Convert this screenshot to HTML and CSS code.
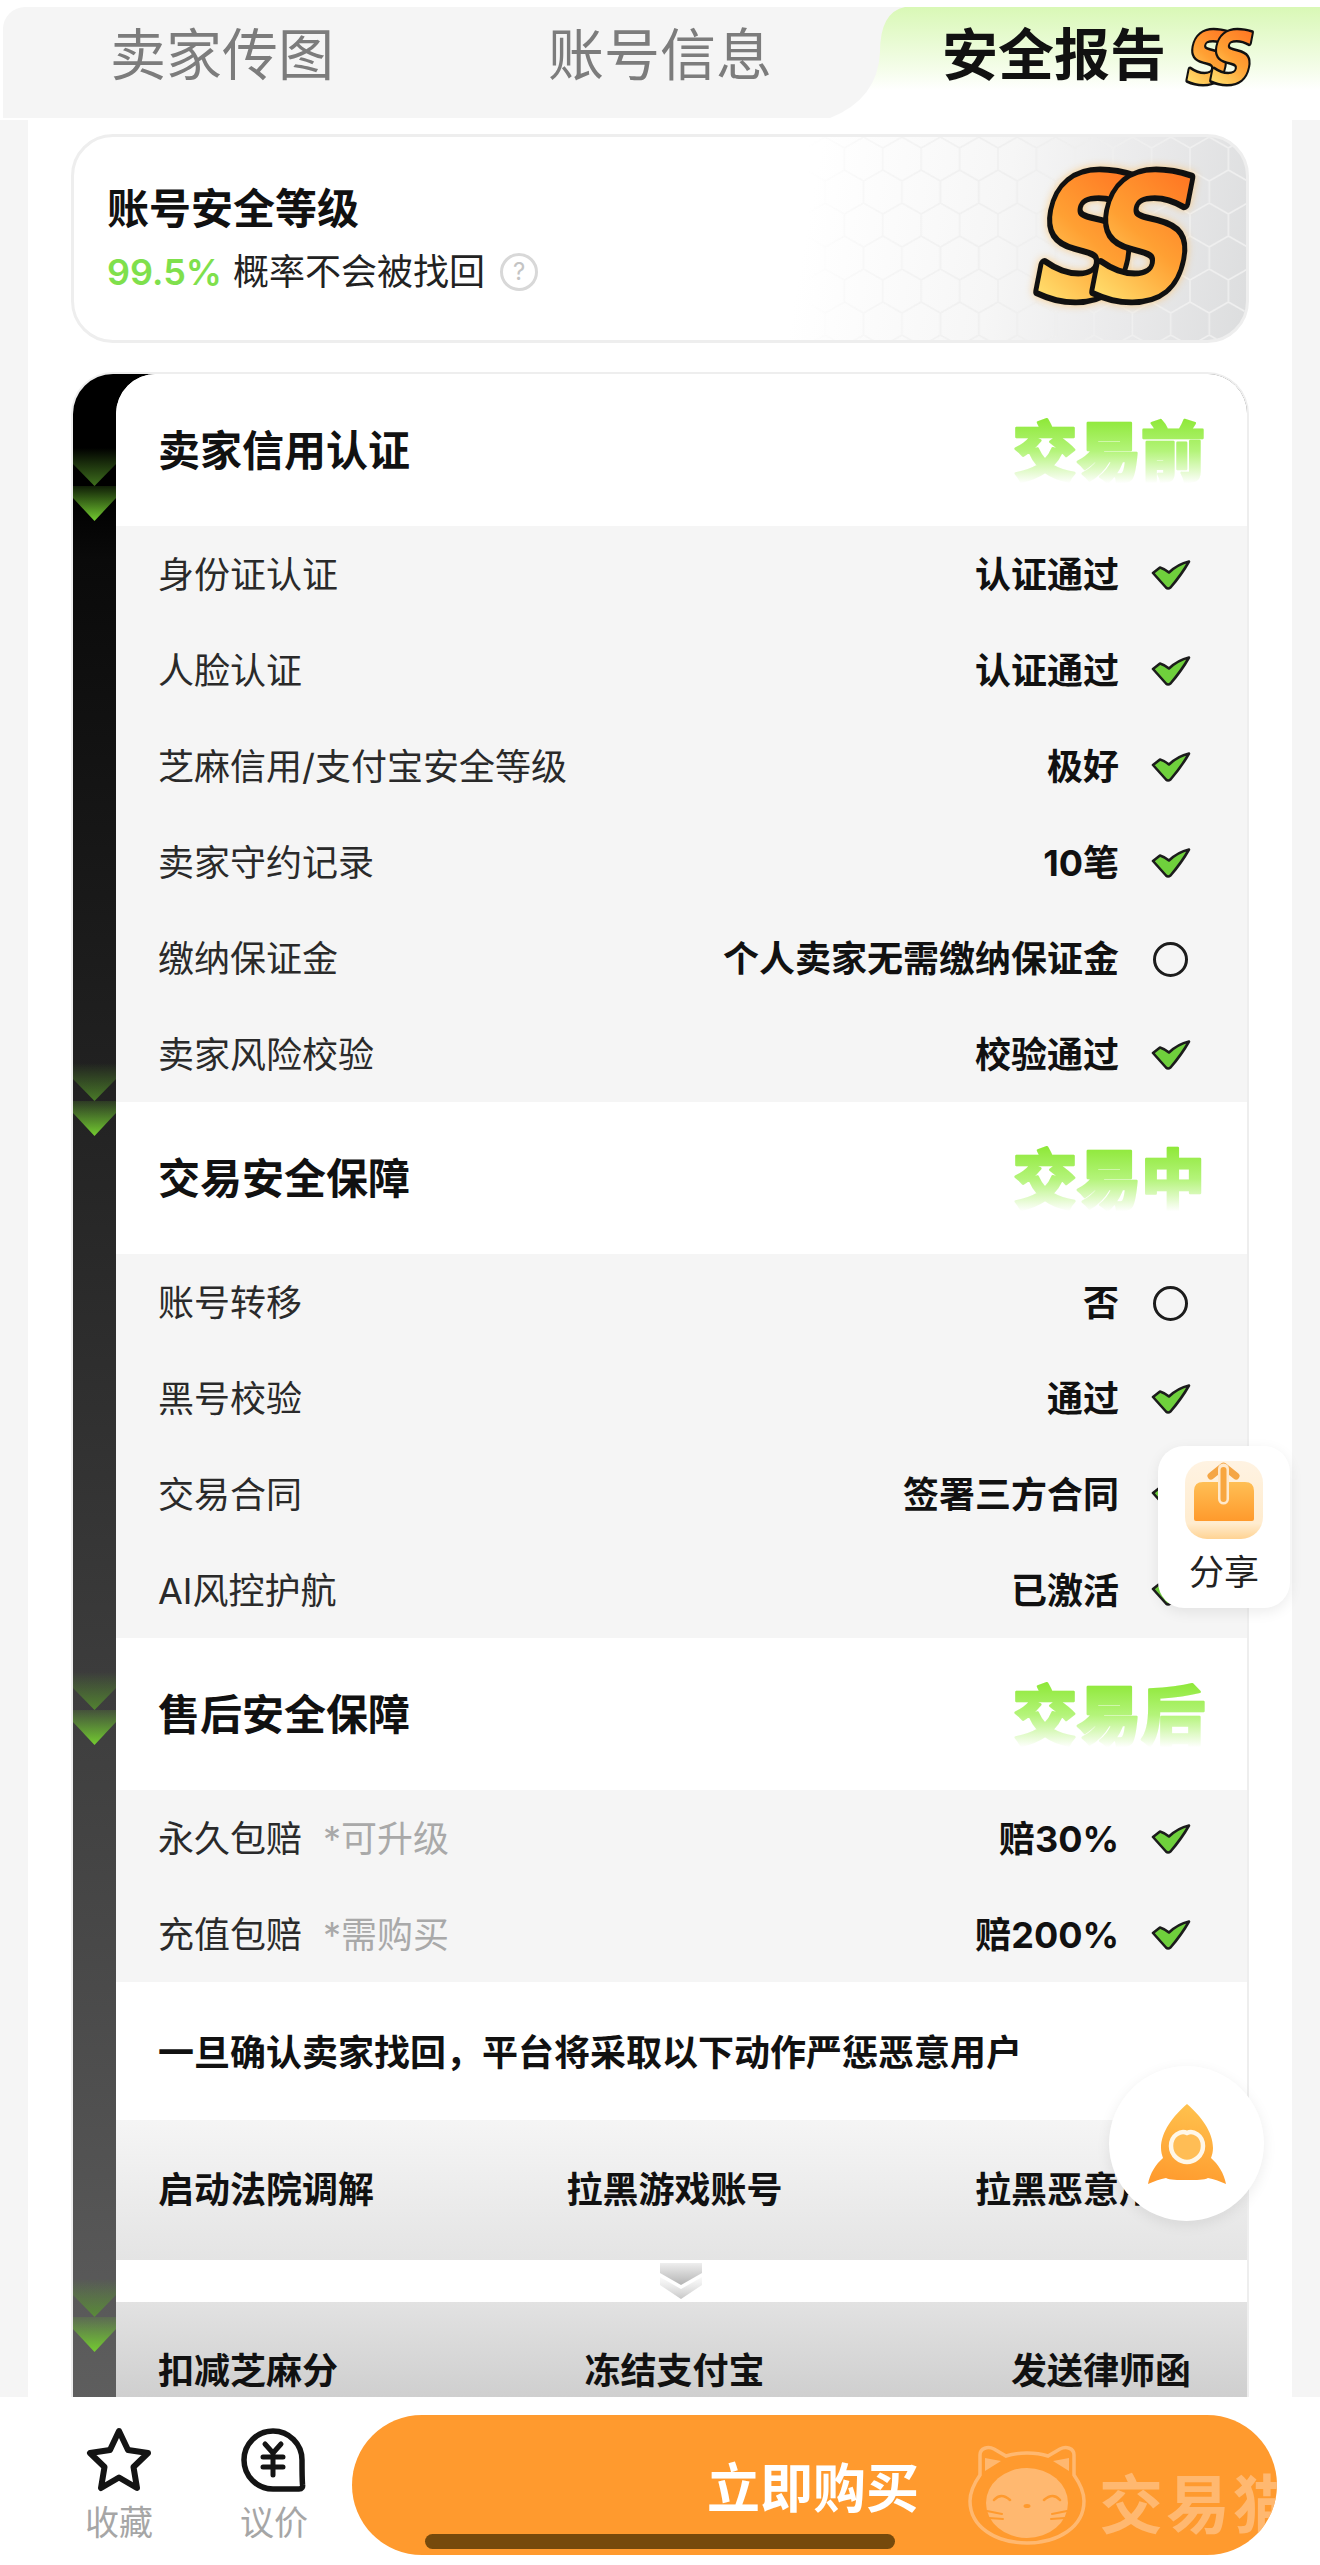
FILE: index.html
```html
<!DOCTYPE html>
<html lang="zh-CN">
<head>
<meta charset="utf-8">
<title>安全报告</title>
<link rel="stylesheet" href="styles.css">
</head>
<body>
<svg class="defs" aria-hidden="true">
  <defs>
    <linearGradient id="ssFill" x1="0.7" y1="0" x2="0.3" y2="1">
      <stop offset="0" stop-color="#ff6a1e"/>
      <stop offset="0.5" stop-color="#ffa033"/>
      <stop offset="1" stop-color="#fff27f"/>
    </linearGradient>
    <linearGradient id="stageFill" gradientUnits="userSpaceOnUse" x1="0" y1="14" x2="0" y2="86">
      <stop offset="0.05" stop-color="#8ee838"/>
      <stop offset="0.5" stop-color="#b4f47a"/>
      <stop offset="0.8" stop-color="#e6fbd2"/>
      <stop offset="0.95" stop-color="#ffffff"/>
    </linearGradient>
    <linearGradient id="chevA" x1="0" y1="0" x2="0" y2="1">
      <stop offset="0" stop-color="#5aa02a" stop-opacity="0"/>
      <stop offset="1" stop-color="#5aa02a" stop-opacity="0.7"/>
    </linearGradient>
    <linearGradient id="chevB" x1="0" y1="0" x2="0" y2="1">
      <stop offset="0" stop-color="#6cc52f" stop-opacity="0.15"/>
      <stop offset="1" stop-color="#74cc30"/>
    </linearGradient>
    <linearGradient id="grayA" x1="0" y1="0" x2="0" y2="1">
      <stop offset="0" stop-color="#e4e4e4" stop-opacity="0.2"/>
      <stop offset="1" stop-color="#c6c6c6"/>
    </linearGradient>
    <linearGradient id="grayB" x1="0" y1="0" x2="0" y2="1">
      <stop offset="0" stop-color="#eeeeee"/>
      <stop offset="1" stop-color="#b4b4b4"/>
    </linearGradient>
    <linearGradient id="trayFill" x1="0" y1="0" x2="0" y2="1">
      <stop offset="0" stop-color="#ffbf55"/>
      <stop offset="1" stop-color="#ff9a2c"/>
    </linearGradient>
    <linearGradient id="tileFill" x1="0" y1="0" x2="0" y2="1">
      <stop offset="0" stop-color="#fff3e2"/>
      <stop offset="0.8" stop-color="#ffeccf"/>
      <stop offset="1" stop-color="#ffd393"/>
    </linearGradient>
    <linearGradient id="rocketFill" x1="0.6" y1="0" x2="0.4" y2="1">
      <stop offset="0" stop-color="#ffc24e"/>
      <stop offset="1" stop-color="#ff9b2e"/>
    </linearGradient>
    <pattern id="hex" width="38.4" height="66" patternUnits="userSpaceOnUse">
      <path d="M0 11V33L19.2 44L38.4 33V11L19.2 0ZM19.2 44V66" fill="none" stroke="#efefef" stroke-width="1.6"/>
    </pattern>
    <linearGradient id="hexFade" x1="0" y1="0" x2="1" y2="0">
      <stop offset="0" stop-color="#fff" stop-opacity="0"/>
      <stop offset="0.4" stop-color="#fff" stop-opacity="1"/>
    </linearGradient>
    <mask id="hexMask"><rect width="440" height="206" fill="url(#hexFade)"/></mask>
    <symbol id="check" viewBox="0 0 40 30">
      <path d="M2 13L9 7.500Q14 9 18 12.500Q27 4 38 1.500Q31 14 19.500 27.500Q17 29.500 15 27.500Z" fill="#6fd03c" stroke="#1c1c1c" stroke-width="2.600" stroke-linejoin="round"/>
    </symbol>
    <symbol id="chevrons" viewBox="0 0 43 73">
      <path d="M0 0H43V16L21.500 38L0 16Z" fill="url(#chevA)"/>
      <path d="M0 38H43V50L21.500 73L0 50Z" fill="url(#chevB)"/>
    </symbol>
  </defs>
</svg>

<div class="page">
  <header class="tabs">
    <div class="tab-group">
      <div class="tab">卖家传图</div>
      <div class="tab">账号信息</div>
    </div>
    <div class="tab-active">
      <span>安全报告</span>
      <svg class="ss-small" viewBox="0 0 170 140">
        <text class="ss-glyph" transform="translate(-4 128) scale(1.42 1.68) skewX(-13)">S</text>
        <text class="ss-glyph" transform="translate(52 128) scale(1.42 1.68) skewX(-13)">S</text>
      </svg>
    </div>
  </header>

  <main class="main">
    <section class="level">
      <svg class="level-hex" viewBox="0 0 440 206" aria-hidden="true">
        <rect width="440" height="206" fill="url(#hex)" mask="url(#hexMask)"/>
      </svg>
      <div class="level-text">
        <h2 class="level-title">账号安全等级</h2>
        <p class="level-sub"><b class="percent">99.5%</b><span>概率不会被找回</span><i class="help">?</i></p>
      </div>
      <svg class="ss-large" viewBox="0 0 170 140">
        <text class="ss-glyph" transform="translate(-4 128) scale(1.42 1.68) skewX(-13)">S</text>
        <text class="ss-glyph" transform="translate(52 128) scale(1.42 1.68) skewX(-13)">S</text>
      </svg>
    </section>

    <section class="report">
      <svg class="chev chev-1"><use href="#chevrons"/></svg>
      <svg class="chev chev-2"><use href="#chevrons"/></svg>
      <svg class="chev chev-3"><use href="#chevrons"/></svg>
      <svg class="chev chev-4"><use href="#chevrons"/></svg>

      <div class="panel">
        <div class="sec-head"><h3>卖家信用认证</h3><svg class="stage" viewBox="0 0 192 100"><text x="0" y="74">交易前</text></svg></div>
        <div class="rows">
          <div class="row"><span>身份证认证</span><b>认证通过</b><svg class="mark"><use href="#check"/></svg></div>
          <div class="row"><span>人脸认证</span><b>认证通过</b><svg class="mark"><use href="#check"/></svg></div>
          <div class="row"><span>芝麻信用/支付宝安全等级</span><b>极好</b><svg class="mark"><use href="#check"/></svg></div>
          <div class="row"><span>卖家守约记录</span><b>10笔</b><svg class="mark"><use href="#check"/></svg></div>
          <div class="row"><span>缴纳保证金</span><b>个人卖家无需缴纳保证金</b><i class="mark ring"></i></div>
          <div class="row"><span>卖家风险校验</span><b>校验通过</b><svg class="mark"><use href="#check"/></svg></div>
        </div>

        <div class="sec-head"><h3>交易安全保障</h3><svg class="stage" viewBox="0 0 192 100"><text x="0" y="74">交易中</text></svg></div>
        <div class="rows">
          <div class="row"><span>账号转移</span><b>否</b><i class="mark ring"></i></div>
          <div class="row"><span>黑号校验</span><b>通过</b><svg class="mark"><use href="#check"/></svg></div>
          <div class="row"><span>交易合同</span><b>签署三方合同</b><svg class="mark"><use href="#check"/></svg></div>
          <div class="row"><span>AI风控护航</span><b>已激活</b><svg class="mark"><use href="#check"/></svg></div>
        </div>

        <div class="sec-head"><h3>售后安全保障</h3><svg class="stage" viewBox="0 0 192 100"><text x="0" y="74">交易后</text></svg></div>
        <div class="rows">
          <div class="row"><span>永久包赔<em>*可升级</em></span><b>赔30%</b><svg class="mark"><use href="#check"/></svg></div>
          <div class="row"><span>充值包赔<em>*需购买</em></span><b>赔200%</b><svg class="mark"><use href="#check"/></svg></div>
        </div>

        <div class="warn">一旦确认卖家找回，平台将采取以下动作严惩恶意用户</div>
        <div class="acts acts-light"><b>启动法院调解</b><b>拉黑游戏账号</b><b>拉黑恶意用户</b></div>
        <div class="sep">
          <svg class="sep-icon" viewBox="0 0 42 36">
            <path d="M0 0H42V10L21 22L0 10Z" fill="url(#grayB)"/>
            <path d="M0 14L21 26L42 14V22L21 36L0 22Z" fill="url(#grayA)"/>
          </svg>
        </div>
        <div class="acts acts-dark"><b>扣减芝麻分</b><b>冻结支付宝</b><b>发送律师函</b></div>
      </div>
    </section>
  </main>

  <footer class="bar">
    <div class="bar-item">
      <svg class="bar-icon" viewBox="0 0 66 66">
        <path d="M33 4L42 23L62 26L47.500 40L51 61L33 50.500L15 61L18.500 40L4 26L24 23Z" fill="none" stroke="#141414" stroke-width="6" stroke-linejoin="round"/>
      </svg>
      <span>收藏</span>
    </div>
    <div class="bar-item">
      <svg class="bar-icon" viewBox="0 0 66 66">
        <path d="M61 33C61 17 48 4 32 4S3 17 3 33S16 62 32 62H58C61 62 62 60 61.500 57.500C61 51 61 40 61 33Z" fill="none" stroke="#141414" stroke-width="5.500" stroke-linejoin="round"/>
        <path d="M24 17L32 26L40 17M22 30H42M22 40H42M32 26V48" fill="none" stroke="#141414" stroke-width="5" stroke-linecap="round" stroke-linejoin="round"/>
      </svg>
      <span>议价</span>
    </div>
    <div class="buy">
      <span class="buy-label">立即购买</span>
      <div class="brand">
        <svg class="brand-cat" viewBox="0 0 118 100">
          <path d="M12 10C12 3 20 1 26 4L38 11C50 7 68 7 80 11L92 4C98 1 106 3 106 10L106 30C113 40 116 48 116 56C116 82 90 98 59 98C28 98 2 82 2 56C2 48 5 40 12 30Z" fill="none" stroke="#ffb870" stroke-width="3.500"/>
          <path d="M17 26V13L33 16Z M101 26V13L85 16Z" fill="#ffb870"/>
          <ellipse cx="59" cy="58" rx="41" ry="35" fill="#ffb870"/>
          <path d="M26 55Q33 47 42 55M76 55Q85 47 92 55" fill="none" stroke="#ff9a2e" stroke-width="2.500" stroke-linecap="round"/>
          <path d="M19 66L34 69M21 73L35 74M99 66L84 69M97 73L83 74" fill="none" stroke="#ff9a2e" stroke-width="2" stroke-linecap="round"/>
          <ellipse cx="59" cy="61" rx="3.500" ry="2" fill="#ff9a2e"/>
        </svg>
        <span class="brand-name">交易猫</span>
      </div>
    </div>
  </footer>

  <div class="share">
    <svg class="share-icon" viewBox="0 0 78 78">
      <rect width="78" height="78" rx="22" fill="url(#tileFill)"/>
      <path d="M9 30Q9 21 18 21H60Q69 21 69 30V58Q69 60 67 60H11Q9 60 9 58Z" fill="url(#trayFill)"/>
      <path d="M26 15L38.500 5L51 15" fill="none" stroke="#f5a645" stroke-width="7" stroke-linejoin="round" stroke-linecap="round"/>
      <path d="M38.500 8V38" fill="none" stroke="#ffe9cc" stroke-width="11" stroke-linecap="round"/>
      <path d="M38.500 9V38" fill="none" stroke="#f8a63f" stroke-width="6" stroke-linecap="round"/>
    </svg>
    <span>分享</span>
  </div>

  <div class="rocket">
    <svg class="rocket-icon" viewBox="0 0 80 80">
      <path d="M40 0C54 12 66 28 66 44C66 48 65 51 64 54C71 60 77 69 79 80C72 77 67 75 61 74C57 76 50 76 40 76C30 76 23 76 19 74C13 75 8 77 1 80C3 69 9 60 16 54C15 51 14 48 14 44C14 28 26 12 40 0Z" fill="url(#rocketFill)"/>
      <path d="M40 29C46 26 56 31 56 42C56 52 47 58 40 58C33 58 24 52 24 42C24 31 34 26 40 29Z" fill="#ffbd55" stroke="#fff7e8" stroke-width="4.500"/>
    </svg>
  </div>

  <div class="home-indicator"></div>
</div>
</body>
</html>
```
FILE: styles.css
```css
* {
  box-sizing: border-box;
}

html,
body {
  margin: 0;
  padding: 0;
  background: #fff;
}

body {
  font-family: "Inter", "Noto Sans CJK SC", sans-serif;
  color: #111;
}

.defs {
  position: absolute;
  width: 0;
  height: 0;
}

.page {
  position: relative;
  width: 1320px;
  height: 2565px;
  overflow: hidden;
  display: flex;
  flex-direction: column;
  background: #fff;
}

/* tabs */
.tabs {
  flex: none;
  height: 120px;
  padding: 7px 0 2px 3px;
  display: flex;
  background: #fff;
}

.tab-group {
  flex: none;
  width: 902px;
  display: flex;
  background: #f5f5f5;
  border-top-left-radius: 22px;
}

.tab {
  width: 438px;
  padding-top: 2px;
  text-align: center;
  font-size: 56px;
  line-height: 92px;
  color: #7c7c7c;
}

.tab-active {
  flex: none;
  width: 490px;
  margin-left: -75px;
  padding: 2px 0 0 112px;
  display: flex;
  align-items: flex-start;
  gap: 18px;
  font-size: 56px;
  font-weight: 700;
  line-height: 92px;
  color: #111;
  background: linear-gradient(#d9f8b6 0, #f4fde9 55%, #fff 75%);
  clip-path: path("M75 0Q50 5 50 45Q48 92 0 111L490 111L490 0Z");
}

.ss-small {
  width: 72px;
  height: 60px;
  margin-top: 19px;
  overflow: visible;
}

.ss-glyph {
  font-family: "DejaVu Sans", sans-serif;
  font-size: 100px;
  font-weight: 700;
  fill: url(#ssFill);
  stroke: #111;
  stroke-width: 7px;
  stroke-linejoin: round;
  paint-order: stroke;
}

/* main column */
.main {
  flex: none;
  height: 2277px;
  overflow: hidden;
  background: linear-gradient(#f5f5f5, #f5f5f5) left / 28px 100% no-repeat,
    linear-gradient(#f5f5f5, #f5f5f5) right / 28px 100% no-repeat,
    #fff;
  padding: 14px 71px 0;
}

/* level card */
.level {
  position: relative;
  width: 1178px;
  height: 209px;
  border: 3px solid #eeeeee;
  border-radius: 42px;
  overflow: hidden;
  display: flex;
  align-items: center;
  justify-content: space-between;
  padding: 0 46px 0 33px;
  background: linear-gradient(100deg, #fff 62%, #f6f6f6 78%, #e9e9ea 90%, #dcddde 100%);
}

.level-hex {
  position: absolute;
  right: 0;
  top: 0;
  width: 440px;
  height: 206px;
}

.level-text {
  position: relative;
}

.level-title {
  margin: 0;
  font-size: 42px;
  line-height: 56px;
  font-weight: 700;
  color: #111;
}

.level-sub {
  margin: 10px 0 0;
  display: flex;
  align-items: center;
  font-size: 36px;
  line-height: 50px;
  color: #222;
}

.percent {
  color: #7fe04c;
  font-weight: 600;
  margin-right: 11px;
}

.help {
  width: 38px;
  height: 38px;
  margin-left: 15px;
  border: 3px solid #d8d8d8;
  border-radius: 50%;
  display: flex;
  align-items: center;
  justify-content: center;
  font-size: 24px;
  line-height: 1;
  font-style: normal;
  color: #c4c4c4;
}

.ss-large {
  position: relative;
  width: 170px;
  height: 140px;
  overflow: visible;
  filter: drop-shadow(0 0 4px rgba(255, 190, 90, 0.7));
}

/* report */
.report {
  position: relative;
  width: 1178px;
  margin-top: 29px;
  padding-left: 2px;
  border: 2px solid #eeeeee;
  border-bottom: 0;
  border-top-left-radius: 42px;
  border-top-right-radius: 42px;
  overflow: hidden;
  background: linear-gradient(#000 6%, #0a0a0a 9%, #4a4a4a 78%, #606060 100%);
}

.chev {
  position: absolute;
  left: 0;
  width: 43px;
  height: 73px;
}

.chev-1 { top: 74px; }
.chev-2 { top: 689px; }
.chev-3 { top: 1298px; }
.chev-4 { top: 1905px; }

.panel {
  margin-left: 41px;
  background: #fff;
  border-top-left-radius: 40px;
  overflow: hidden;
}

.sec-head {
  height: 152px;
  padding: 1px 42px 0 42px;
  display: flex;
  align-items: center;
  justify-content: space-between;
  background: #fff;
}

.sec-head h3 {
  margin: 0;
  font-size: 42px;
  line-height: 56px;
  font-weight: 700;
  color: #111;
}

.stage {
  width: 192px;
  height: 100px;
  overflow: visible;
}

.stage text {
  font-family: "Noto Sans CJK SC", sans-serif;
  font-size: 64px;
  font-weight: 900;
  fill: url(#stageFill);
  stroke: url(#stageFill);
  stroke-width: 2.500px;
  stroke-linejoin: round;
}

.rows {
  background: #f5f5f5;
}

.row {
  height: 96px;
  padding: 2px 56px 0 42px;
  display: flex;
  align-items: center;
  font-size: 36px;
  line-height: 50px;
}

.row span {
  flex: 1;
  color: #2a2a2a;
}

.row em {
  margin-left: 21px;
  font-style: normal;
  color: #a9a9a9;
}

.row b {
  font-weight: 700;
  color: #111;
}

.mark {
  flex: none;
  width: 40px;
  height: 30px;
  margin-left: 32px;
}

.ring {
  height: 35px;
  width: 35px;
  margin-left: 34px;
  margin-right: 3px;
  border: 3px solid #1c1c1c;
  border-radius: 50%;
}

.warn {
  height: 138px;
  padding: 0 0 2px 42px;
  display: flex;
  align-items: center;
  font-size: 36px;
  font-weight: 700;
  color: #111;
  background: #fff;
}

.acts {
  height: 140px;
  padding: 0 56px 7px 42px;
  display: flex;
  align-items: center;
  justify-content: space-between;
  font-size: 36px;
  color: #111;
}

.acts-light {
  background: linear-gradient(#f5f5f5, #e4e4e4);
}

.acts-dark {
  padding-bottom: 9px;
  background: linear-gradient(#e2e2e2, #c6c6c6);
}

.sep {
  height: 42px;
  display: flex;
  justify-content: center;
  align-items: center;
  padding-right: 2px;
  background: #fff;
}

.sep-icon {
  width: 42px;
  height: 36px;
}

/* bottom bar */
.bar {
  flex: 1;
  position: relative;
  padding: 18px 43px 10px 80px;
  display: flex;
  align-items: flex-start;
  background: #fff;
}

.bar-item {
  flex: none;
  width: 78px;
  margin-right: 77px;
  padding-top: 12px;
  display: flex;
  flex-direction: column;
  align-items: center;
  font-size: 34px;
  line-height: 46px;
  color: #a6a6a6;
}

.bar-item span {
  margin-top: 7px;
}

.bar-icon {
  width: 66px;
  height: 66px;
}

.bar-item + .bar-item {
  margin-right: 39px;
}

.buy {
  flex: none;
  width: 925px;
  height: 140px;
  position: relative;
  overflow: hidden;
  border-radius: 70px;
  background: #ff9a2e;
  display: flex;
  align-items: center;
  padding-left: 355px;
}

.buy-label {
  font-size: 53px;
  font-weight: 700;
  color: #fff;
}

.brand {
  position: absolute;
  left: 616px;
  top: 30px;
  display: flex;
  align-items: center;
  gap: 13px;
}

.brand-cat {
  width: 118px;
  height: 100px;
}

.brand-name {
  font-family: "Noto Sans CJK SC", sans-serif;
  font-size: 64px;
  line-height: 80px;
  font-weight: 700;
  letter-spacing: 3px;
  color: #ffb870;
  white-space: nowrap;
  margin-top: 10px;
}

/* floating */
.share {
  position: absolute;
  top: 1446px;
  right: 30px;
  width: 132px;
  height: 162px;
  padding-top: 15px;
  display: flex;
  flex-direction: column;
  align-items: center;
  border-radius: 26px;
  background: #fff;
  box-shadow: 0 4px 14px rgba(0, 0, 0, 0.08);
  font-size: 35px;
  line-height: 46px;
  color: #222;
}

.share-icon {
  width: 78px;
  height: 78px;
  margin-bottom: 10px;
}

.rocket {
  position: absolute;
  top: 2066px;
  left: 1109px;
  width: 155px;
  height: 155px;
  display: flex;
  align-items: center;
  justify-content: center;
  border-radius: 50%;
  background: #fff;
  box-shadow: 0 4px 14px rgba(0, 0, 0, 0.08);
}

.rocket-icon {
  width: 80px;
  height: 80px;
}

.home-indicator {
  position: absolute;
  top: 2534px;
  left: 425px;
  width: 470px;
  height: 15px;
  border-radius: 8px;
  background: #764a0c;
}
```
